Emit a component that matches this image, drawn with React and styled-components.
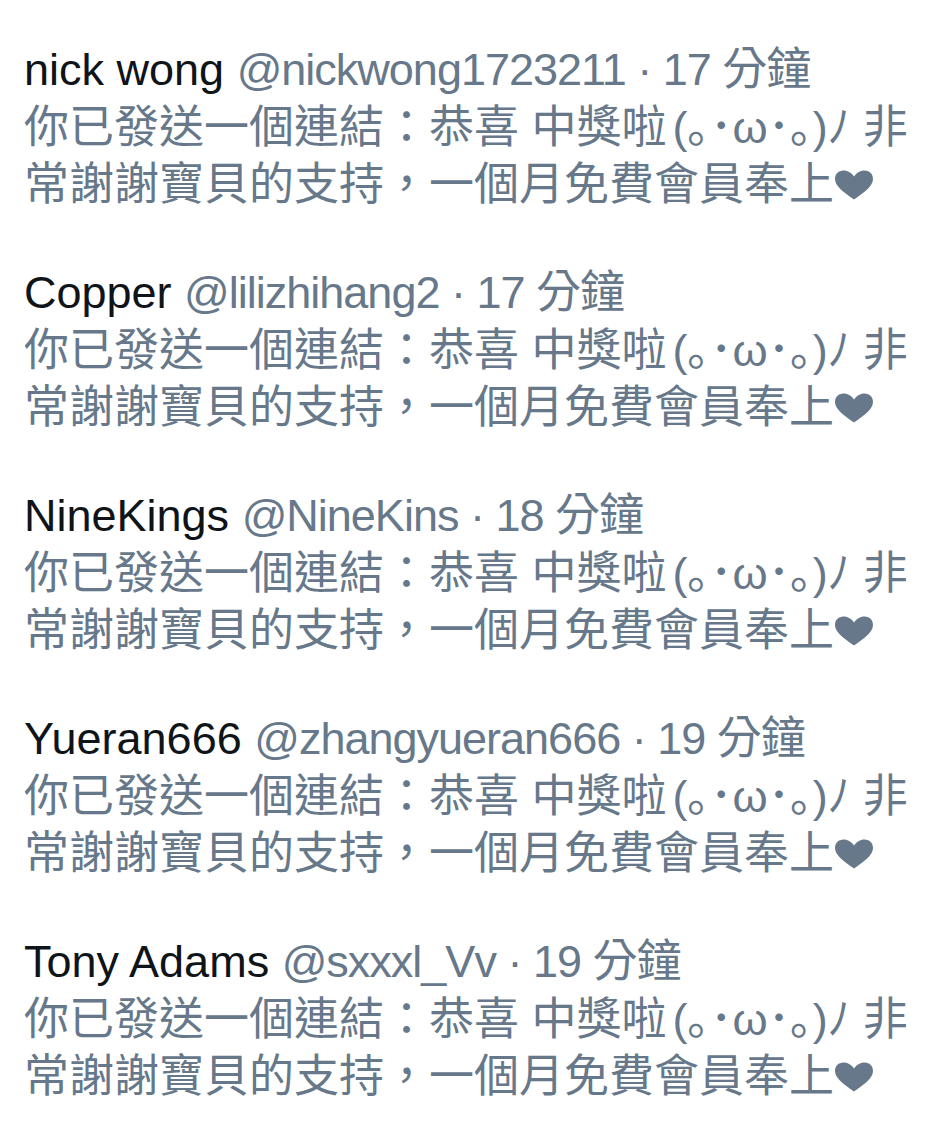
import styled, { createGlobalStyle } from "styled-components";

const GlobalStyle = createGlobalStyle`
  html, body {
    margin: 0;
    padding: 0;
    background: #ffffff;
  }
  body {
    font-family: "Liberation Sans", "Noto Sans CJK TC", sans-serif;
    -webkit-font-smoothing: antialiased;
  }
`;

const List = styled.div`
  display: flex;
  flex-direction: column;
  gap: 51px;
  padding: 41px 0 0 24px;
  font-size: 45px;
  color: #66788a;
`;

const Entry = styled.div`
  display: flex;
  flex-direction: column;
`;

const Header = styled.div`
  height: 58px;
  line-height: 57px;
  white-space: nowrap;
`;

const Name = styled.span`
  color: #0f1419;
`;

const Meta = styled.span`
  letter-spacing: -1px;
`;

const Line = styled.div`
  height: 57px;
  line-height: 57px;
  white-space: nowrap;
`;

const Kaomoji = styled.span`
  margin-left: 6px;
`;

const Heart = styled.svg`
  width: 40px;
  height: 30px;
  vertical-align: baseline;
  fill: #66788a;
`;

const entries = [
  { name: "nick wong", handle: "@nickwong1723211", time: "17 分鐘" },
  { name: "Copper", handle: "@lilizhihang2", time: "17 分鐘" },
  { name: "NineKings", handle: "@NineKins", time: "18 分鐘" },
  { name: "Yueran666", handle: "@zhangyueran666", time: "19 分鐘" },
  { name: "Tony Adams", handle: "@sxxxl_Vv", time: "19 分鐘" },
];

const HeartIcon = () => (
  <Heart viewBox="0 0 40 30">
    <path d="M20 29.5C9 22 1 16 1 9C1 4 4.5 0.5 9.5 0.5C14 0.5 17.5 3 20 6.5C22.5 3 26 0.5 30.5 0.5C35.5 0.5 39 4 39 9C39 16 31 22 20 29.5Z" />
  </Heart>
);

const App = () => {
  return (
    <>
      <GlobalStyle />
      <List>
        {entries.map((e) => (
          <Entry key={e.handle}>
            <Header>
              <Name>{e.name}</Name>{" "}
              <Meta>
                {e.handle} · {e.time}
              </Meta>
            </Header>
            <Line>
              你已發送一個連結：恭喜 中獎啦<Kaomoji>(｡･ω･｡)ﾉ</Kaomoji> 非
            </Line>
            <Line>
              常謝謝寶貝的支持，一個月免費會員奉上
              <HeartIcon />
            </Line>
          </Entry>
        ))}
      </List>
    </>
  );
};

export default App;
